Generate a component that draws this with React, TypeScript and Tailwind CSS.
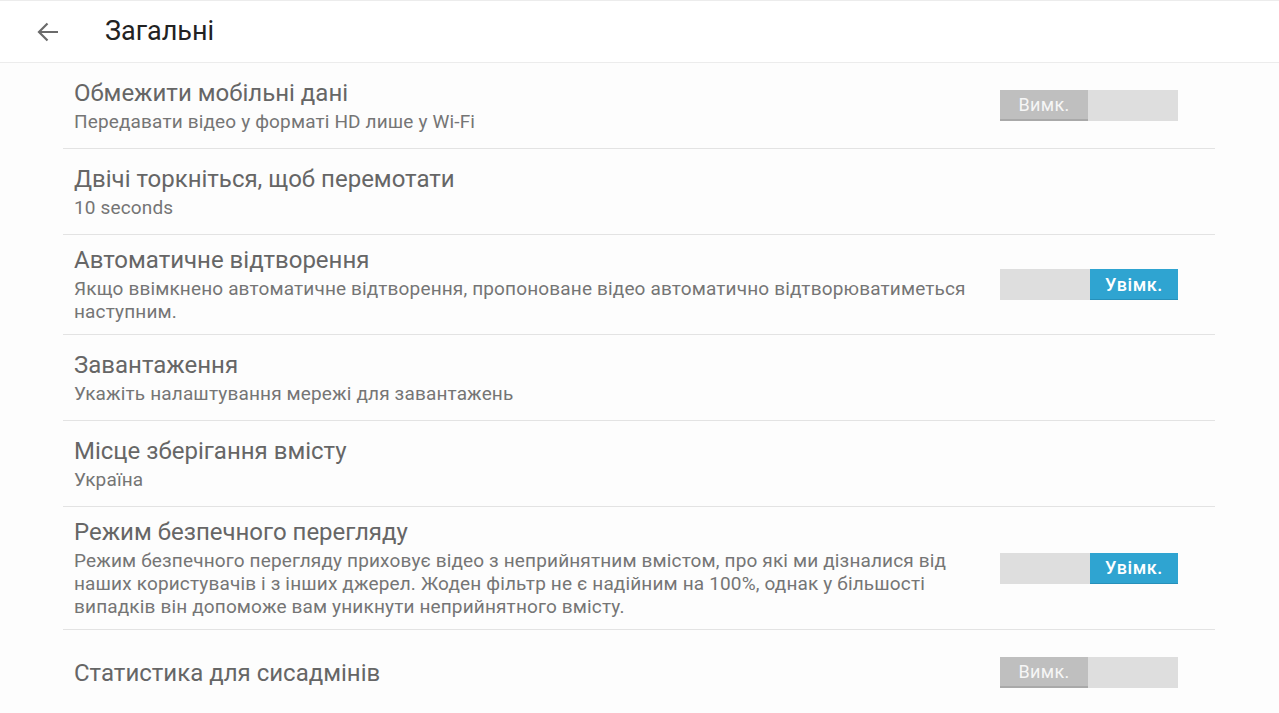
import React from "react";

type Row = {
  title: string;
  subtitle?: string;
  toggle?: "on" | "off";
};

const rows: Row[] = [
  { title: "Обмежити мобільні дані", subtitle: "Передавати відео у форматі HD лише у Wi-Fi", toggle: "off" },
  { title: "Двічі торкніться, щоб перемотати", subtitle: "10 seconds" },
  {
    title: "Автоматичне відтворення",
    subtitle:
      "Якщо ввімкнено автоматичне відтворення, пропоноване відео автоматично відтворюватиметься наступним.",
    toggle: "on",
  },
  { title: "Завантаження", subtitle: "Укажіть налаштування мережі для завантажень" },
  { title: "Місце зберігання вмісту", subtitle: "Україна" },
  {
    title: "Режим безпечного перегляду",
    subtitle:
      "Режим безпечного перегляду приховує відео з неприйнятним вмістом, про які ми дізналися від наших користувачів і з інших джерел. Жоден фільтр не є надійним на 100%, однак у більшості випадків він допоможе вам уникнути неприйнятного вмісту.",
    toggle: "on",
  },
  { title: "Статистика для сисадмінів", toggle: "off" },
];

function Toggle({ on }: { on: boolean }) {
  return (
    <div className="flex h-[31px] w-[178px] shrink-0 bg-[#dedede]">
      {on ? (
        <>
          <div className="w-[90px]" />
          <div className="flex w-[88px] items-center justify-center bg-[#2fa4d1] border-b border-[#2790ba] text-[18px] font-medium tracking-[0.6px] text-white">
            Увімк.
          </div>
        </>
      ) : (
        <div className="flex w-[88px] items-center justify-center bg-[#bfbfbf] border-b-2 border-[#a9a9a9] text-[18px] tracking-[0.3px] text-[#f6f6f6]">
          Вимк.
        </div>
      )}
    </div>
  );
}

export default function App() {
  return (
    <div
      className="min-h-[713px] w-full bg-[#fdfdfd] overflow-hidden"
      style={{ fontFamily: "Roboto, 'Noto Sans', sans-serif" }}
    >
      <div className="flex h-[63px] items-center border-b border-t border-[#ececec] bg-white">
        <div className="ml-[36px] flex h-[24px] w-[24px] items-center justify-center">
          <svg width="22" height="20" viewBox="0 0 22 20" fill="none">
            <path d="M21 10H2.5M10.5 1.5L2 10l8.5 8.5" stroke="#6b6b6b" strokeWidth="2.2" />
          </svg>
        </div>
        <div className="ml-[45px] text-[27px] text-[#222222] leading-none pb-[1px]">Загальні</div>
      </div>
      <div className="ml-[63px] w-[1152px]">
        {rows.map((r, i) => (
          <div
            key={i}
            className="flex min-h-[86px] items-center border-b border-[#e3e3e3] py-[11px] pl-[11px] pr-[37px]"
          >
            <div className="flex flex-1 flex-col justify-center pr-[22px]">
              <div className="text-[24px] leading-[28px] text-[#666666]">{r.title}</div>
              {r.subtitle && (
                <div className="mt-[3px] text-[19px] leading-[23px] tracking-[0.15px] text-[#757575]">
                  {r.subtitle}
                </div>
              )}
            </div>
            {r.toggle && <Toggle on={r.toggle === "on"} />}
          </div>
        ))}
      </div>
    </div>
  );
}
